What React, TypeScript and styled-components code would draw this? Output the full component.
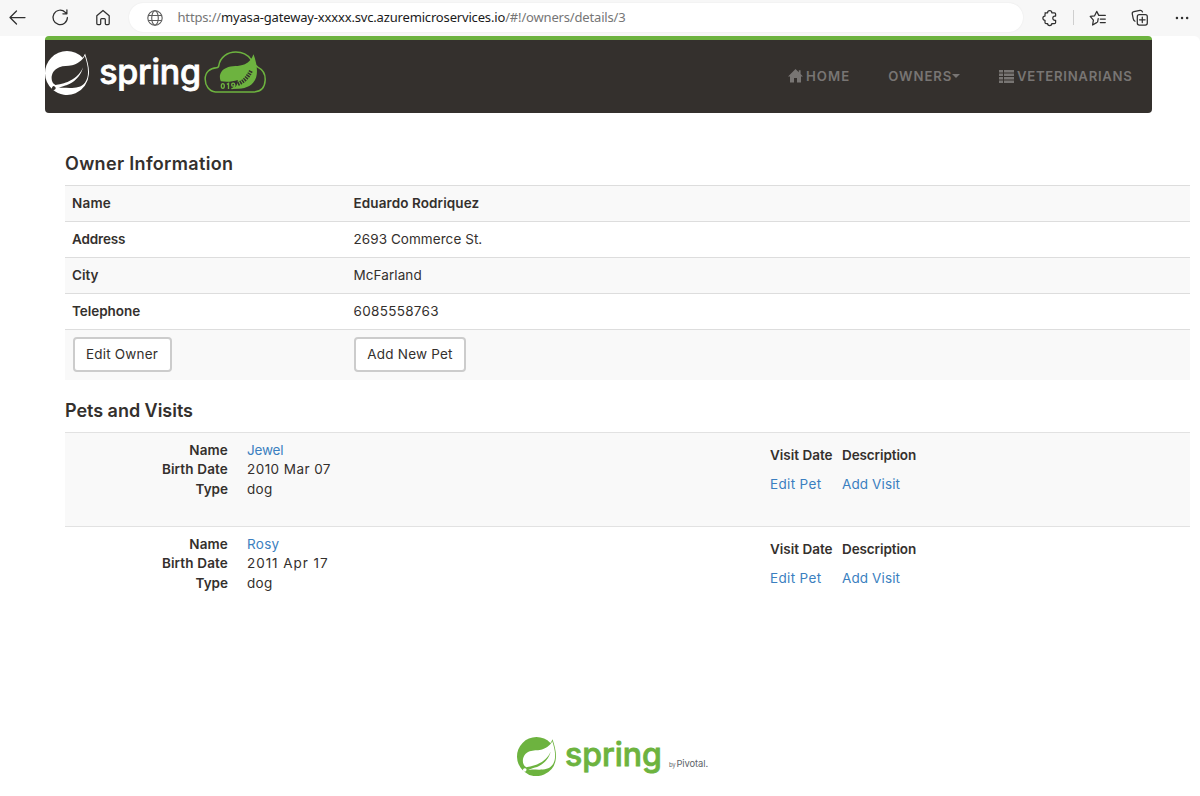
import React from "react";
import styled, { createGlobalStyle } from "styled-components";
import { SiSpring } from "react-icons/si";

const Global = createGlobalStyle`
  *, *::before, *::after { box-sizing: border-box; }
  html, body { margin: 0; padding: 0; background: #fff; overflow: hidden; }
  body { font-family: Inter, "Open Sans", sans-serif; font-size: 13.5px; color: #34302d; }
  a { color: #3b7fc0; text-decoration: none; }
`;

const Window = styled.div`
  width: 1200px;
  height: 796px;
  display: flex;
  flex-direction: column;
  background: #f7f7f7;
`;

const Toolbar = styled.header`
  flex: none;
  height: 36px;
  display: flex;
  align-items: flex-start;
  padding: 3px 10px 0 7px;
  color: #303030;
`;

const IconSlot = styled.span<{ $w: number }>`
  width: ${(p) => p.$w}px;
  height: 29px;
  flex: none;
  display: flex;
  align-items: center;
  justify-content: flex-start;
  svg { display: block; fill: none; stroke: currentColor; stroke-width: 1.25; stroke-linecap: round; stroke-linejoin: round; }
`;

const Dots = styled.svg`
  && { stroke-width: 2.4; }
`;

const AddressBar = styled.div`
  width: 894px;
  height: 29px;
  margin-right: 18px;
  border-radius: 15px;
  background: #fff;
  box-shadow: 0 0 2px rgba(0, 0, 0, 0.07);
  display: flex;
  align-items: center;
  padding: 0 0 0 18px;
  gap: 14.5px;
  svg { fill: none; stroke: #5c5c5c; stroke-width: 1.1; }
`;

const Url = styled.span`
  font-family: "Noto Sans", "Open Sans", sans-serif;
  font-size: 13px;
  letter-spacing: -0.165px;
  color: #767676;
  white-space: pre;
  padding-bottom: 1px;
  b { font-weight: 400; color: #1b1b1b; }
`;

const Divider = styled.span`
  width: 1px;
  height: 15px;
  margin: 7px 15px 0 -1px;
  background: #cfcfcf;
`;

const Page = styled.main`
  flex: 1;
  min-height: 0;
  background: #fff;
  border-radius: 0 6px 0 0;
  display: flex;
  flex-direction: column;
`;

const Navbar = styled.nav`
  flex: none;
  width: 1106.4px;
  height: 77px;
  margin-left: 45.2px;
  border-top: 4px solid #6db33f;
  border-radius: 4px;
  background: #34302d;
  display: flex;
  align-items: flex-start;
  justify-content: space-between;
`;

const Brand = styled.div`
  display: flex;
  align-items: flex-start;
  padding-top: 11px;
  color: #fff;
`;

const Wordmark = styled.span<{ $size: number; $ls: number; $mt: number; $ml: number }>`
  font-family: Inter, sans-serif;
  font-weight: 500;
  font-size: ${(p) => p.$size}px;
  line-height: 44px;
  letter-spacing: ${(p) => p.$ls}px;
  margin: ${(p) => p.$mt}px 0 0 ${(p) => p.$ml}px;
  -webkit-text-stroke: 0.8px currentColor;
  stroke-linejoin: round;
`;

const CloudMark = styled.svg`
  display: block;
  margin-left: 3px;
`;

const Menu = styled.div`
  display: flex;
  padding: 26px 19px 0 0;
`;

const MenuItem = styled.a<{ $gap?: number; $ls: number }>`
  display: flex;
  align-items: center;
  height: 20px;
  margin-left: ${(p) => p.$gap ?? 0}px;
  font-weight: 600;
  font-size: 13.2px;
  letter-spacing: ${(p) => p.$ls}px;
  color: #787573;
  svg { fill: currentColor; margin-right: 3px; }
`;

const Caret = styled.i`
  border: 4px solid transparent;
  border-top-color: currentColor;
  border-bottom: 0;
`;

const Content = styled.section`
  width: 1125px;
  margin-left: 65px;
  display: flex;
  flex-direction: column;
`;

const Heading = styled.h2<{ $mt: number; $ls: number }>`
  margin: ${(p) => p.$mt}px 0 0;
  height: 31px;
  line-height: 20px;
  font-weight: 600;
  font-size: 18px;
  letter-spacing: ${(p) => p.$ls}px;
`;

const Row = styled.div<{ $striped?: boolean; $h: number }>`
  display: grid;
  grid-template-columns: 281.5px 1fr;
  height: ${(p) => p.$h}px;
  padding: 7px 0 0 7px;
  border-top: 1px solid #dddddd;
  background: ${(p) => (p.$striped ? "#f9f9f9" : "#fff")};
  line-height: 20px;
`;

const Text = styled.span<{ $bold?: boolean; $ls?: number }>`
  font-weight: ${(p) => (p.$bold ? 600 : 400)};
  letter-spacing: ${(p) => p.$ls ?? 0}px;
  white-space: nowrap;
`;

const Button = styled.button<{ $w: number; $ls: number }>`
  width: ${(p) => p.$w}px;
  height: 35px;
  margin-left: 0.5px;
  padding: 0 0 1px;
  border: 2px solid #cccccc;
  border-radius: 4px;
  background: #fff;
  color: #34302d;
  font: inherit;
  letter-spacing: ${(p) => p.$ls}px;
`;

const PetRow = styled.div<{ $striped?: boolean }>`
  display: grid;
  grid-template-columns: 705px 1fr;
  height: 94px;
  border-top: 1px solid #e2e2e2;
  background: ${(p) => (p.$striped ? "#f9f9f9" : "#fff")};
`;

const Details = styled.div`
  display: grid;
  grid-template-columns: 163px 1fr;
  column-gap: 19px;
  grid-auto-rows: 19.5px;
  line-height: 19.5px;
  padding-top: 7.5px;
  > :nth-child(odd) { text-align: right; }
`;

const Visits = styled.div`
  display: grid;
  grid-template-columns: 72px 1fr;
  grid-auto-rows: 29px;
  line-height: 20px;
  padding-top: 12px;
`;

const Footer = styled.footer`
  display: flex;
  align-items: flex-start;
  margin: 117px 0 0 517px;
  color: #6db33f;
`;

const Pivotal = styled.span`
  display: flex;
  align-items: baseline;
  gap: 1px;
  margin: 21px 0 0 7px;
  font-size: 9.4px;
  line-height: 12px;
  letter-spacing: -0.1px;
  color: #5d6468;
  small { font-size: 6px; letter-spacing: -0.2px; }
`;

const pets = [
  { name: "Jewel", birth: "2010 Mar 07", type: "dog", nameLs: -0.2, birthLs: 0.44 },
  { name: "Rosy", birth: "2011 Apr 17", type: "dog", nameLs: 0.3, birthLs: 0.95 },
];

const owner = [
  { label: "Name", value: "Eduardo Rodriquez", bold: true, ls: 0.2, vls: 0.1 },
  { label: "Address", value: "2693 Commerce St.", ls: -0.15, vls: 0.06 },
  { label: "City", value: "McFarland", ls: 0, vls: 0.08 },
  { label: "Telephone", value: "6085558763", ls: -0.05, vls: 0.3 },
];

function CloudLogo() {
  return (
    <CloudMark width="62" height="42" viewBox="28.5 25 184 126">
      <path
        d="M62 148C43 146 31 129 31 109C31 89 45 76 65 75C69 75 72 73 72 68C76 43 98 28 123 28C144 28 159 37 168 50C176 61 180 68 190 74C204 81 212 95 211 113C210 134 199 147 178 148Z"
        fill="none" stroke="#6db33f" strokeWidth="4.5" />
      <path d="M176 35C184 57 190 82 184 104C177 127 155 138 132 138L108 139C125 134 128 127 129 112C111 118 94 118 78 116C71 100 77 83 94 76C111 68 131 73 150 65C163 59 171 49 176 35Z" fill="#6db33f" />
      <path d="M129 124C148 116 159 104 169 83" fill="none" stroke="#34302d" strokeWidth="12" strokeDasharray="4.5 3" />
      <g fill="none" stroke="#6db33f" strokeWidth="4">
        <ellipse cx="84" cy="130" rx="4.5" ry="7" />
        <path d="M96 125L101 122V139" />
        <circle cx="115" cy="126" r="4.5" />
        <path d="M120 126C120 134 117 137 110 138" />
      </g>
    </CloudMark>
  );
}

export default function App() {
  return (
    <Window>
      <Global />
      <Toolbar>
        <IconSlot $w={44}>
          <svg width="20" height="20" viewBox="0 0 20 20"><path d="M18 9.5H3M9.5 3L3 9.5L9.5 16" /></svg>
        </IconSlot>
        <IconSlot $w={43}>
          <svg width="19" height="19" viewBox="0 0 19 19"><path d="M16.4 9.5A7.2 7.2 0 1 1 14.2 4.2L15.8 5.6M15.9 1.8V5.8H11.9" /></svg>
        </IconSlot>
        <IconSlot $w={35}>
          <svg width="18" height="19" viewBox="0 0 18 19"><path d="M2.8 7.8L9 2.5L15.2 7.8V15.5Q15.2 16.6 14.1 16.6H12.2Q11.3 16.6 11.3 15.6V11.5Q11.3 10.6 10.4 10.6H7.6Q6.7 10.6 6.7 11.5V15.6Q6.7 16.6 5.8 16.6H3.9Q2.8 16.6 2.8 15.5Z" /></svg>
        </IconSlot>
        <AddressBar>
          <svg width="16" height="16" viewBox="0 0 16 16">
            <circle cx="8" cy="8" r="7.2" /><ellipse cx="8" cy="8" rx="3.3" ry="7.2" /><path d="M1.4 5.5H14.6M1.4 10.5H14.6" />
          </svg>
          <Url>https://<b>myasa-gateway-xxxxx.svc.azuremicroservices.io</b>/#!/owners/details/3</Url>
        </AddressBar>
        <IconSlot $w={33}>
          <svg width="18" height="18" viewBox="0 0 18 18"><path d="M4 3.8H6.6A2.1 2.1 0 0 1 10.8 3.8H13.4Q14.6 3.8 14.6 5V7.1H13.9A2 2 0 0 0 13.9 11.3H14.6V13.4Q14.6 14.6 13.4 14.6H10.8A2.1 2.1 0 0 1 6.6 14.6H5.2Q4 14.6 4 13.4V11.3A2.1 2.1 0 0 1 4 7.1V5Q4 3.8 5.2 3.8" /></svg>
        </IconSlot>
        <Divider />
        <IconSlot $w={42}>
          <svg width="18" height="18" viewBox="0 0 18 18"><path d="M7.6 13.6L3.6 16L4.4 11.1L1.2 7.4L5.6 6.8L7.7 2.4L9.8 6.4H16.3M11.3 10H16.3M11.3 13.6H16.3M9.2 9.6L8.6 13" /></svg>
        </IconSlot>
        <IconSlot $w={43}>
          <svg width="18" height="18" viewBox="0 0 18 18"><rect x="6.3" y="5.7" width="10" height="10.3" rx="2" /><path d="M11.3 8V13.6M8.5 10.8H14.1M4 12.2C2.7 11.6 2.4 10.7 2.2 9.6L1.3 5.2C1 3.8 1.6 3 2.9 2.7L9 1.4C10.3 1.2 11 1.7 11.5 2.9" /></svg>
        </IconSlot>
        <IconSlot $w={16}>
          <Dots width="16" height="6" viewBox="0 0 16 6"><path d="M2.9 3H3M8 3H8.1M13.1 3H13.2" /></Dots>
        </IconSlot>
      </Toolbar>
      <Page>
        <Navbar>
          <Brand>
            <SiSpring size={44} />
            <Wordmark $size={34} $ls={-0.2} $mt={-1} $ml={10}>spring</Wordmark>
            <CloudLogo />
          </Brand>
          <Menu>
            <MenuItem $ls={1}>
              <svg width="15" height="14" viewBox="0 0 15 14"><path d="M7.5 0L10.8 3.2V1.2H12.6V5L15 7.4H13V13.5H9V9H6V13.5H2V7.4H0Z" /></svg>
              HOME
            </MenuItem>
            <MenuItem $gap={38} $ls={0.95}>OWNERS<Caret /></MenuItem>
            <MenuItem $gap={38.5} $ls={0.7}>
              <svg width="15" height="13" viewBox="0 0 15 13"><path d="M0 0H4V2.6H0ZM5 0H15V2.6H5ZM0 3.5H4V6.1H0ZM5 3.5H15V6.1H5ZM0 7H4V9.6H0ZM5 7H15V9.6H5ZM0 10.4H4V13H0ZM5 10.4H15V13H5Z" /></svg>
              VETERINARIANS
            </MenuItem>
          </Menu>
        </Navbar>
        <Content>
          <Heading $mt={41} $ls={0.33}>Owner Information</Heading>
          {owner.map((o, i) => (
            <Row key={o.label} $h={36} $striped={i % 2 === 0}>
              <Text $bold $ls={o.ls}>{o.label}</Text>
              <Text $bold={o.bold} $ls={o.vls}>{o.value}</Text>
            </Row>
          ))}
          <Row $h={51} $striped>
            <Button $w={99} $ls={0.2}>Edit Owner</Button>
            <Button $w={112} $ls={0.2}>Add New Pet</Button>
          </Row>
          <Heading $mt={21} $ls={-0.03}>Pets and Visits</Heading>
          {pets.map((p, i) => (
            <PetRow key={p.name} $striped={i % 2 === 0}>
              <Details>
                <Text $bold $ls={0.15}>Name</Text>
                <Text as="a" $ls={p.nameLs}>{p.name}</Text>
                <Text $bold $ls={0.15}>Birth Date</Text>
                <Text $ls={p.birthLs}>{p.birth}</Text>
                <Text $bold $ls={0}>Type</Text>
                <Text $ls={0.3}>{p.type}</Text>
              </Details>
              <Visits>
                <Text $bold $ls={0}>Visit Date</Text>
                <Text $bold $ls={-0.1}>Description</Text>
                <Text as="a" $ls={0.35}>Edit Pet</Text>
                <Text as="a" $ls={0.12}>Add Visit</Text>
              </Visits>
            </PetRow>
          ))}
        </Content>
        <Footer>
          <SiSpring size={39} />
          <Wordmark $size={32} $ls={0} $mt={-4} $ml={9}>spring</Wordmark>
          <Pivotal><small>by</small>Pivotal.</Pivotal>
        </Footer>
      </Page>
    </Window>
  );
}
